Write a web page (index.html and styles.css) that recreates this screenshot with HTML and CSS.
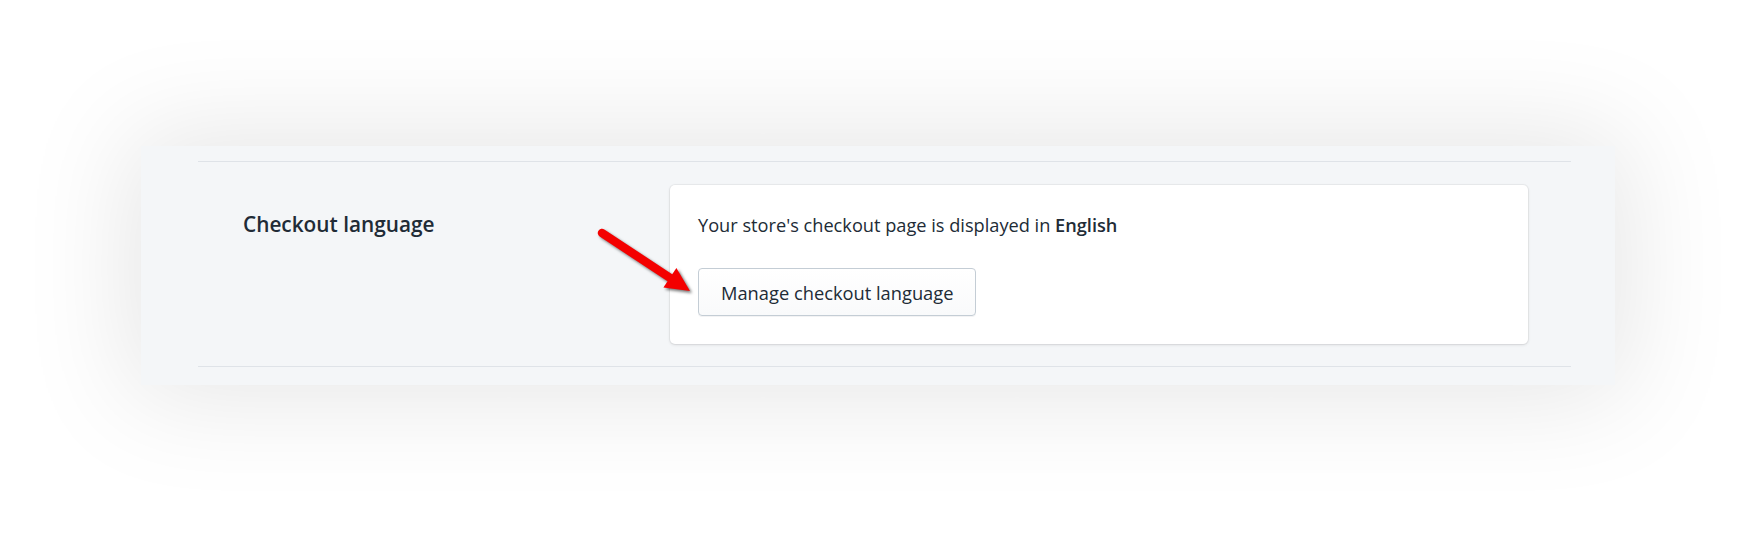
FILE: index.html
```html
<!DOCTYPE html>
<html lang="en">
<head>
  <meta charset="UTF-8" />
  <meta name="viewport" content="width=device-width, initial-scale=1.0"/>
  <title>Checkout language</title>
  <link rel="stylesheet" href="styles.css">
</head>
<body>
  <div class="page">
    <section class="panel">
      <div class="layout">
        <div class="layout-title">
          <h2>Checkout language</h2>
        </div>
        <div class="card">
          <p>Your store's checkout page is displayed in <strong>English</strong></p>
          <button class="btn">Manage checkout language</button>
        </div>
        <!-- pointer arrow -->
        <svg class="pointer" width="110" height="80" viewBox="0 0 110 80">
          <line x1="9" y1="11" x2="78" y2="56.5" stroke="#f40000" stroke-width="8.5" stroke-linecap="round"/>
          <polygon points="97,69 70.4,65.6 83.4,46" fill="#f40000"/>
        </svg>
      </div>
    </section>
  </div>
</body>
</html>
```

FILE: styles.css
```css
html, body {
  height: 100%;
}
body {
  margin: 0;
  background: #fff;
  color: #212b36;
  font-family: 'Open Sans', 'Liberation Sans', sans-serif;
}
.page {
  min-height: 100%;
  box-sizing: border-box;
  display: flex;
  justify-content: center;
  align-items: flex-start;
  padding-top: 146px;
  overflow: hidden;
}
.panel {
  width: 1474px;
  box-sizing: border-box;
  background: #f4f6f8;
  padding: 15px 44px 18px 57px;
  box-shadow: 0 0 110px 12px rgba(0,0,0,0.1);
}
.layout {
  position: relative;
  display: grid;
  grid-template-columns: 427px 1fr;
  padding: 23px 43px 22px 45px;
  border-top: 1px solid #dfe3e8;
  border-bottom: 1px solid #dfe3e8;
}
.layout-title h2 {
  margin: 24px 0 0;
  font-size: 20.8px;
  line-height: 30px;
  font-weight: 600;
}
.card {
  background: #fff;
  border-radius: 5px;
  padding: 28px;
  box-shadow: 0 0 0 1px rgba(63,63,68,0.05), 0 1px 3px 0 rgba(63,63,68,0.15);
}
.card p {
  margin: 0 0 30px;
  font-size: 18.2px;
  line-height: 25px;
}
.card strong {
  font-weight: 600;
}
.btn {
  height: 48px;
  padding: 1px 22px 0;
  border: 1px solid #c4cdd5;
  border-radius: 4px;
  background: linear-gradient(180deg, #fff, #f9fafb);
  box-shadow: 0 1px 0 0 rgba(22,29,37,0.05);
  color: #212b36;
  font-family: inherit;
  font-size: 18.3px;
  cursor: pointer;
}
.pointer {
  position: absolute;
  left: 395px;
  top: 60px;
  filter: drop-shadow(2px 2px 1.5px rgba(0,0,0,0.55));
}
```
